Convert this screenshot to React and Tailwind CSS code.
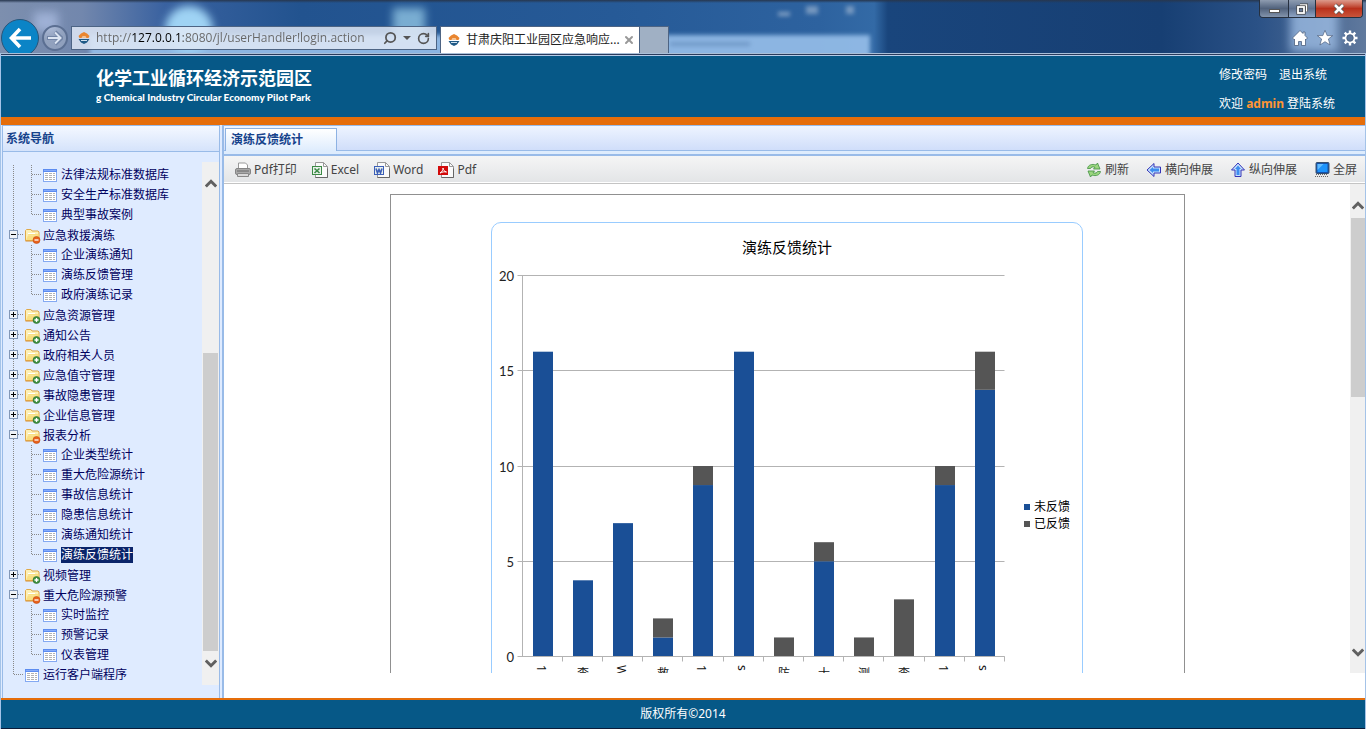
import { useState } from 'react'
import { RotateCw, Search, X } from 'lucide-react'

const tree = [
  {
    label: '法律法规库',
    open: true,
    hidden: true,
    children: ['法律法规标准数据库', '安全生产标准数据库', '典型事故案例'],
  },
  {
    label: '应急救援演练',
    open: true,
    children: ['企业演练通知', '演练反馈管理', '政府演练记录'],
  },
  { label: '应急资源管理' },
  { label: '通知公告' },
  { label: '政府相关人员' },
  { label: '应急值守管理' },
  { label: '事故隐患管理' },
  { label: '企业信息管理' },
  {
    label: '报表分析',
    open: true,
    children: [
      '企业类型统计',
      '重大危险源统计',
      '事故信息统计',
      '隐患信息统计',
      '演练通知统计',
      '演练反馈统计',
    ],
  },
  { label: '视频管理' },
  {
    label: '重大危险源预警',
    open: true,
    children: ['实时监控', '预警记录', '仪表管理'],
  },
]

const chartData = [
  { name: '1', pending: 16, done: 0 },
  { name: '李', pending: 4, done: 0 },
  { name: 'W', pending: 7, done: 0 },
  { name: '救', pending: 1, done: 1 },
  { name: '1', pending: 9, done: 1 },
  { name: 's', pending: 16, done: 0 },
  { name: '防', pending: 0, done: 1 },
  { name: '士', pending: 5, done: 1 },
  { name: '测', pending: 0, done: 1 },
  { name: '李', pending: 0, done: 3 },
  { name: '1', pending: 9, done: 1 },
  { name: 's', pending: 14, done: 2 },
]

/* ---------- Icons ---------- */

function SiteIcon() {
  return (
    <svg className="w-3 h-3 shrink-0" viewBox="0 0 12 12">
      <path d="M6 0 9 1.500 11.500 4 10.500 6H8.500A2.600 2.600 0 0 0 3.500 6H1.500L.5 4 3 1.500Z" fill="#e9852f" />
      <path d="M4 6a2 2 0 0 1 4 0Z" fill="#f4c08d" />
      <path d="M.5 7h11L9 10.500 6 12 3 10.500Z" fill="#1f5a86" />
      <path d="M3 8.500h6" stroke="#cfe0ee" />
    </svg>
  )
}

function HomeIcon() {
  return (
    <svg className="w-4 h-4" viewBox="0 0 16 16">
      <path
        d="M8 .5.500 8 2 9.500l.5-.5v6.500h4v-4h3v4h4V9l.5.5L15.500 8 13 5.500V2h-2v1.500Z"
        fill="#fff"
        stroke="#4b5f7e"
        strokeWidth=".8"
      />
    </svg>
  )
}

function StarIcon() {
  return (
    <svg className="w-4 h-4" viewBox="0 0 16 16">
      <path
        d="m8 .3 2.200 5.300h5.500L11.400 9l1.700 6L8 11.700 2.900 15l1.700-6L.3 5.600h5.500Z"
        fill="#fff"
        stroke="#4b5f7e"
        strokeWidth=".7"
      />
    </svg>
  )
}

function GearIcon() {
  return (
    <svg className="w-4 h-4" viewBox="0 0 16 16" fill="none">
      <path
        d="M8 .5v3M8 12.500v3M.5 8h3M12.500 8h3M2.700 2.700l2 2M11.300 11.300l2 2M2.700 13.300l2-2M11.300 4.700l2-2"
        stroke="#fff"
        strokeWidth="2.400"
      />
      <circle cx="8" cy="8" r="4.400" stroke="#fff" strokeWidth="2" />
      <circle cx="8" cy="8" r="3.200" stroke="#4b5f7e" strokeWidth=".8" />
    </svg>
  )
}

function FolderIcon({ open }) {
  return (
    <svg className="w-4 h-4 shrink-0" viewBox="0 0 16 16">
      <path d="M.5 12.500v-10l1-1h4.500l1 1.500h6l1 1v8.500Z" fill="#fdf0b4" stroke="#e0a94a" />
      <path d="M3 5.500h7M3 7.500h9" stroke="#fff" />
      <path d="M1 12.500 3.500 6H14v6.500Z" fill="#f7d970" opacity=".75" />
      <path d="M.5 13h10" stroke="#d98c2b" />
      <circle cx="11.500" cy="12" r="3.500" fill={open ? '#e8611c' : '#3f9140'} stroke={open ? '#c24a10' : '#2c6b2e'} strokeWidth=".6" />
      <path d={open ? 'M9.500 12h4' : 'M9.500 12h4M11.500 10v4'} stroke="#fff" strokeWidth="1.300" />
    </svg>
  )
}

function SheetIcon() {
  return (
    <svg className="w-[14px] h-[14px] shrink-0" viewBox="0 0 14 14" shapeRendering="crispEdges">
      <path d="M0 0h14v13H0z" fill="#84a9f2" />
      <path d="M0 0h14v3H0z" fill="#5c8cf0" />
      <path d="M1 1h12v1H1z" fill="#86abfa" />
      <path d="M1 3h12v9H1z" fill="#fff" />
      <path d="M2 4.500h3M6 4.500h3M10 4.500h2M2 6.500h3M6 6.500h3M10 6.500h2M2 8.500h3M6 8.500h3M10 8.500h2M2 10.500h3M6 10.500h3M10 10.500h2" stroke="#b3b3b3" />
    </svg>
  )
}

function PrinterIcon() {
  return (
    <svg className="w-4 h-4" viewBox="0 0 16 16">
      <path d="M3.500 7V1h7l2 2v4" fill="#fff" stroke="#999" />
      <rect x=".5" y="6.500" width="15" height="6" rx="1.500" fill="#a9a9a9" stroke="#858585" />
      <path d="M2 9h12" stroke="#6b6b6b" />
      <path d="M2.500 11.500h11v3h-11Z" fill="#d9d9d9" stroke="#888" />
    </svg>
  )
}

function DocIcon({ color, glyph, solid }) {
  return (
    <svg className="w-4 h-4" viewBox="0 0 16 16" fill="none">
      <path d="M3.500.500h8l4 4v11h-12Z" fill="#fafafa" stroke="#999" />
      <path d="M11.500.500v4h4" stroke="#999" />
      <path d="M3.500 15.500h12v-9" stroke="#666" />
      <rect x=".5" y="4.500" width="9" height="8" fill={solid ? color : '#e9f0ea'} stroke={color} />
      <path d={glyph} stroke={solid ? '#fff' : color} strokeWidth={solid ? '1' : '1.600'} />
    </svg>
  )
}

function RefreshIcon() {
  return (
    <svg className="w-4 h-4" viewBox="0 0 16 16" fill="#9bd67f" stroke="#3f9140" strokeWidth=".8" strokeLinejoin="round">
      <path d="M1.500 6.500C2 3 6 1.500 10 3l1.500-2 2.500 6H7.500L9 5.200C6.500 4.500 5 5 4.500 6.500Z" />
      <path d="M14.500 9.500C14 13 10 14.500 6 13l-1.500 2L2 9h6.500L7 10.800c2.500.7 4 .2 4.500-1.300Z" />
    </svg>
  )
}

function ArrowIcon({ up }) {
  return (
    <svg className={up ? 'w-4 h-4 rotate-90' : 'w-4 h-4'} viewBox="0 0 16 16">
      <path d="M1 8 8 1.500V5h6.500v6H8v3.500Z" fill="#c5e2fd" stroke="#3434b8" strokeLinejoin="round" />
      <path d="M3.500 8 7 5v1.500h6v3H7V11Z" fill="#3d8df0" />
    </svg>
  )
}

function ScreenIcon() {
  return (
    <svg className="w-4 h-4" viewBox="0 0 16 16">
      <rect x="2" y=".5" width="13" height="11" rx="1" fill="#1550a8" stroke="#37506e" />
      <rect x="3.500" y="2" width="10" height="8" fill="#1c93fb" />
      <path d="M3.500 2h6l-6 6Z" fill="#62bcff" />
      <path d="M2 12h12l2 3.500H0Z" fill="#e8e8e8" />
      <path d="M1 14.500h14M2 12.500h12" stroke="#666" strokeDasharray="1 1" />
    </svg>
  )
}

/* ---------- Browser window ---------- */

function BrowserBar() {
  const [url, setUrl] = useState(
    'http://127.0.0.1:8080/jl/userHandler!login.action'
  )

  return (
    <div className="relative h-[53px] shrink-0 overflow-hidden pt-[26px] bg-[linear-gradient(90deg,#7d8fae_0%,#7287ad_6%,#3a62a0_12%,#22538f_22%,#265a97_45%,#2d629f_60%,#336aa6_64%,#19457c_65%,#173f73_85%,#2a5186_92%,#60799d_100%)]">
      {/* Blurred desktop behind the glass frame */}
      <div className="absolute inset-x-0 top-0 h-[3px] bg-linear-to-b from-[#27374f] to-transparent" />
      <div className="absolute top-[35px] left-[90px] w-[780px] h-6 bg-[#97bfea] opacity-90 blur-[2px]" />
      <div className="absolute top-[6px] left-[165px] w-12 h-12 rounded-full bg-[#9fd3f4] blur-[4px]" />
      <div className="absolute top-[8px] left-[393px] w-8 h-8 bg-[#8fc3e2] opacity-80 blur-[4px]" />
      <div className="absolute top-[12px] left-[34px] w-6 h-5 bg-[#a9bbe0] opacity-80 blur-[5px]" />
      <div className="absolute top-[12px] left-[778px] w-3 h-1 bg-[#a6bbd5] opacity-70 blur-[2px]" />
      <div className="absolute top-[6px] left-[806px] w-3 h-2 bg-[#a6bbd5] opacity-60 blur-[2px]" />
      <div className="absolute top-[6px] left-[846px] w-2 h-2 bg-[#a6bbd5] opacity-60 blur-[2px]" />
      <div className="absolute top-[42px] left-[670px] w-20 h-1 bg-[#5f86b5] opacity-60 blur-[2px]" />
      <div className="absolute top-[8px] right-[28px] w-12 h-11 bg-[#a9c8ee] opacity-70 blur-[5px]" />

      <div className="absolute top-0 right-[3px] flex h-[18px] rounded-b border border-t-0 border-[#26303f] overflow-hidden">
        <button className="w-7 flex items-end justify-center pb-1 bg-linear-to-b from-[#8e9cb0] via-[#51627c] to-[#8394ac]" aria-label="最小化">
          <span className="w-[11px] h-1 bg-white border border-[#555]" />
        </button>
        <button className="w-7 flex items-center justify-center border-x border-[#26303f] bg-linear-to-b from-[#8e9cb0] via-[#5e7190] to-[#8ea4c4]" aria-label="还原">
          <svg className="w-3 h-3" viewBox="0 0 12 12" fill="none">
            <path d="M4 2h6.500v6.500" stroke="#444" strokeWidth="3" />
            <path d="M4 2h6.500v6.500" stroke="#fff" strokeWidth="1.500" />
            <rect x="2" y="4" width="6" height="6" stroke="#444" strokeWidth="3.200" />
            <rect x="2" y="4" width="6" height="6" stroke="#fff" strokeWidth="1.800" />
          </svg>
        </button>
        <button className="w-[46px] flex items-center justify-center bg-linear-to-b from-[#dc9a8c] via-[#b9301b] to-[#c9543a]" aria-label="关闭">
          <svg className="w-3 h-3" viewBox="0 0 12 12">
            <path d="m2 2 8 8m0-8-8 8" stroke="#555" strokeWidth="4.200" />
            <path d="m2 2 8 8m0-8-8 8" stroke="#fff" strokeWidth="2.600" />
          </svg>
        </button>
      </div>

      <div className="relative flex h-6 items-center pl-px pr-2">
        <button className="w-[38px] h-[38px] shrink-0 rounded-full border border-[#2a5579] bg-[#0b84c6] flex items-center justify-center" aria-label="后退">
          <svg className="w-[22px] h-[22px]" viewBox="0 0 22 22" fill="none" stroke="#fff" strokeWidth="3.600">
            <path d="M2 11h20M11 2 2.500 11l8.500 9" />
          </svg>
        </button>
        <button className="ml-[3px] w-[26px] h-[26px] shrink-0 rounded-full border-2 border-[#5b6f92] bg-white/20 flex items-center justify-center" aria-label="前进">
          <svg className="w-4 h-4" viewBox="0 0 16 16" fill="none">
            <path d="M0 8h14M8 2l6.500 6L8 14" stroke="#7184a6" strokeWidth="4" />
            <path d="M1 8h12M8 2.500 13.500 8 8 13.500" stroke="#dbe4f2" strokeWidth="2" />
          </svg>
        </button>
        <div className="ml-[3px] w-[366px] h-6 flex items-center gap-[6px] px-[6px] border border-[#4d6484] bg-[#dfe8f4]/85">
          <SiteIcon />
          <input
            className="flex-1 min-w-0 h-5 outline-none font-['Open_Sans','Noto_Sans_CJK_SC',sans-serif] text-xs leading-5 text-transparent bg-clip-text bg-[linear-gradient(90deg,#666_35px,#000_35px,#000_87px,#666_87px)]"
            aria-label="地址"
            value={url}
            onChange={(e) => setUrl(e.target.value)}
          />
          <Search className="w-[14px] h-[14px] text-[#555] -scale-x-100" strokeWidth={3} />
          <span className="border-4 border-b-0 border-x-transparent border-t-[#555]" />
          <RotateCw className="w-[13px] h-[13px] text-[#555]" strokeWidth={3} />
        </div>
        <div className="ml-[3px] self-start w-[200px] h-[27px] flex items-center gap-[6px] px-[7px] bg-white border border-b-0 border-[#4d6484] text-[#222]">
          <SiteIcon />
          <span className="whitespace-nowrap">甘肃庆阳工业园区应急响应...</span>
          <button className="-ml-[3px]" aria-label="关闭标签页">
            <X className="w-3 h-3 text-[#999]" strokeWidth={4} />
          </button>
        </div>
        <button className="self-start w-[29px] h-[27px] bg-[#a0b0c4] border border-l-0 border-b-0 border-[#4d6484]" aria-label="新建标签页" />
        <div className="ml-auto flex gap-[9px]">
          <button aria-label="主页"><HomeIcon /></button>
          <button aria-label="收藏"><StarIcon /></button>
          <button aria-label="工具"><GearIcon /></button>
        </div>
      </div>
    </div>
  )
}

/* ---------- Page ---------- */

function Header() {
  return (
    <header className="h-[69px] shrink-0 flex items-start bg-[#065887] border-b-8 border-[#e56d0a] text-white">
      <div className="pl-[95px] pt-[11px]">
        <h1 className="text-lg leading-[22px] font-bold">化学工业循环经济示范园区</h1>
        <p className="text-[10px] leading-4 font-black font-['Lato',sans-serif]">
          g Chemical Industry Circular Economy Pilot Park
        </p>
      </div>
      <div className="ml-auto w-[146px] pt-[9px] leading-5">
        <div className="flex gap-3">
          <a href="#password">修改密码</a>
          <a href="#logout">退出系统</a>
        </div>
        <p className="mt-[9px] whitespace-nowrap">
          欢迎 <b className="text-[#ff9433]">admin</b> 登陆系统
        </p>
      </div>
    </header>
  )
}

// One 18px cell of the tree's dotted guide lines
function Guide({ last, branch, toggle, open }) {
  return (
    <svg className="w-[18px] h-5 shrink-0" viewBox="0 0 18 20" fill="none" shapeRendering="crispEdges">
      <path d={last ? 'M8.500 0v10' : 'M8.500 0v20'} stroke="#888" strokeDasharray="1 1" />
      {branch && <path d="M9 9.500h9" stroke="#888" strokeDasharray="1 1" />}
      {toggle && (
        <>
          <rect x="4.500" y="5.500" width="8" height="8" fill="#eef2f8" stroke="#8398b8" />
          <path d={open ? 'M6 9.500h5' : 'M6 9.500h5M8.500 7v5'} stroke="#000" />
        </>
      )}
    </svg>
  )
}

function Leaf({ label, active, onSelect }) {
  return (
    <a
      href="#leaf"
      className="flex items-center text-[#00005e]"
      onClick={(e) => {
        e.preventDefault()
        onSelect?.(label)
      }}
    >
      <span className="w-5 h-5 flex items-center pl-[2px] pt-[2px]">
        <SheetIcon />
      </span>
      <span className={active ? 'leading-4 bg-[#0a246a] text-white' : 'leading-4'}>{label}</span>
    </a>
  )
}

function ScrollButton({ up, className }) {
  return (
    <button className={`flex shrink-0 items-center justify-center ${className}`} aria-label={up ? '向上滚动' : '向下滚动'}>
      <svg className="w-3 h-[9px]" viewBox="0 0 12 9" fill="none" stroke="#606060" strokeWidth="3">
        <path d={up ? 'M.8 7.500 6 2.300l5.200 5.200' : 'M.8 1.500 6 6.700l5.200-5.200'} />
      </svg>
    </button>
  )
}

function Sidebar() {
  const [selected, setSelected] = useState('演练反馈统计')

  return (
    <aside className="w-[218px] shrink-0 flex flex-col border-x border-t border-[#99bbe8] bg-[#dfebff]">
      <h2 className="h-[26px] shrink-0 px-[3px] leading-[26px] font-bold text-[#15428b] border-b border-[#99bbe8] bg-linear-to-b from-[#f4f8ff] to-[#d5e3fb]">
        系统导航
      </h2>
      <div className="mt-[10px] mb-[13px] flex flex-1 min-h-0">
        <ul className="flex-1 min-w-0 pl-[2px] pt-[3px] overflow-hidden whitespace-nowrap">
          {tree.map((node) => (
            <li key={node.label}>
              {!node.hidden && (
                <div className="flex items-center text-[#00005e]">
                  <Guide branch toggle open={node.open} />
                  <span className="w-5 h-5 flex items-center pl-[2px] pt-[2px]">
                    <FolderIcon open={node.open} />
                  </span>
                  <a href="#folder" className="leading-4 pt-[2px]">{node.label}</a>
                </div>
              )}
              {node.open && (
                <ul>
                  {node.children.map((label, i) => (
                    <li key={label} className="flex">
                      <Guide />
                      <Guide branch last={i === node.children.length - 1} />
                      <Leaf label={label} active={label === selected} onSelect={setSelected} />
                    </li>
                  ))}
                </ul>
              )}
            </li>
          ))}
          <li className="flex">
            <Guide branch last />
            <Leaf label="运行客户端程序" />
          </li>
        </ul>
        <div className="w-[17px] flex flex-col bg-[#f0f0f0] px-px pb-[10px]">
          <ScrollButton up className="h-[42px]" />
          <div className="grow-[149]" />
          <div className="grow-[298] bg-[#cdcdcd]" />
          <ScrollButton className="h-6" />
        </div>
      </div>
    </aside>
  )
}

function ToolButton({ icon, children }) {
  return (
    <button className="flex items-center gap-[3px] text-[#444] whitespace-nowrap">
      {icon}
      {children}
    </button>
  )
}

function Toolbar() {
  return (
    <div className="h-[28px] shrink-0 border-b border-[#c4c4c4]">
      <div className="h-[26px] flex items-center justify-between pt-px pl-[11px] pr-2 bg-linear-to-b from-[#f5f5f5] to-[#e3e5e7]">
        <div className="flex gap-[15px]">
          <ToolButton icon={<PrinterIcon />}>Pdf打印</ToolButton>
          <ToolButton icon={<DocIcon color="#3b8a45" glyph="m2.500 6.500 5 4.500m0-4.500-5 4.500" />}>Excel</ToolButton>
          <ToolButton icon={<DocIcon color="#3c5fb8" glyph="m2 6.500 1.500 4.500L5 7.500 6.500 11 8 6.500" />}>Word</ToolButton>
          <ToolButton icon={<DocIcon color="#d20a0a" solid glyph="M2 11c2-1 3-3 3-5 .5 2 1 3.500 3.500 4-2.500-.5-4 0-6.500 1" />}>Pdf</ToolButton>
        </div>
        <div className="flex gap-[17px]">
          <ToolButton icon={<RefreshIcon />}>刷新</ToolButton>
          <ToolButton icon={<ArrowIcon />}>横向伸展</ToolButton>
          <ToolButton icon={<ArrowIcon up />}>纵向伸展</ToolButton>
          <ToolButton icon={<ScreenIcon />}>全屏</ToolButton>
        </div>
      </div>
    </div>
  )
}

const LEFT = 30.5
const BASE = 385.5
const STEP = 40.2
const UNIT = 19.05

// Labels run downwards: Latin letters lie on their side, Chinese ones stand upright
function AxisLabel({ x, name }) {
  if (/[\x21-\x7e]/.test(name)) {
    return (
      <text transform={`translate(${x + 4} 394) rotate(90)`} fontSize="12" fill="#111">
        {name}
      </text>
    )
  }
  return (
    <text x={x + 10} y="407" textAnchor="middle" fontSize="12" fill="#111">
      {name}
    </text>
  )
}

function Chart() {
  return (
    <svg className="w-[520px] h-[520px] shrink-0 overflow-visible" viewBox="0 0 520 520" role="img" aria-label="演练反馈统计">
      {[0, 5, 10, 15, 20].map((v) => {
        const y = Math.round(BASE - v * UNIT - 0.5) + 0.5
        return (
          <g key={v}>
            <path d={`M${LEFT - 5} ${y}H512.500`} stroke="#b3b3b3" />
            <text x="22" y={y + 5} textAnchor="end" fontSize="13" fill="#222" fontFamily="Lato, sans-serif">
              {v}
            </text>
          </g>
        )
      })}
      <path d={`M${LEFT} 4.500V${BASE}`} stroke="#b3b3b3" />
      {chartData.map((d, i) => {
        const x = Math.round(LEFT + i * STEP + 10)
        const pendingTop = BASE - d.pending * UNIT
        return (
          <g key={i}>
            <path d={`M${Math.round(LEFT + (i + 1) * STEP) - 0.5} ${BASE}v5`} stroke="#b3b3b3" />
            <rect x={x} y={pendingTop} width="20" height={d.pending * UNIT} fill="#1a4f96" />
            <rect x={x} y={pendingTop - d.done * UNIT} width="20" height={d.done * UNIT} fill="#555" />
            <AxisLabel x={x} name={d.name} />
          </g>
        )
      })}
      <path d={`M${LEFT} ${BASE}H512.500`} stroke="#b3b3b3" />
    </svg>
  )
}

function Report() {
  return (
    <div className="flex flex-1 min-h-0 mb-[25px] overflow-hidden">
      <div className="flex-1 min-w-0 overflow-hidden pt-[10px]">
        <div className="mx-auto w-[795px] pt-[27px] border border-[#909090]">
          <div className="mx-auto w-[592px] rounded-[10px] border border-[#99ccff]">
            <h2 className="h-12 leading-[48px] text-center text-[15px] text-black">演练反馈统计</h2>
            <div className="flex items-start">
              <Chart />
              <ul className="ml-3 mt-[227px] leading-[17px] text-black">
                <li className="flex items-center gap-1">
                  <span className="w-[6px] h-[6px] bg-[#1a4f96]" />
                  未反馈
                </li>
                <li className="flex items-center gap-1">
                  <span className="w-[6px] h-[6px] bg-[#555]" />
                  已反馈
                </li>
              </ul>
            </div>
          </div>
        </div>
      </div>
      <div className="w-[15px] shrink-0 flex flex-col bg-[#f0f0f0] pt-2 pl-px">
        <ScrollButton up className="h-[26px]" />
        <div className="grow-[179] bg-[#cdcdcd]" />
        <div className="grow-[234]" />
        <ScrollButton className="h-[42px]" />
      </div>
    </div>
  )
}

function App() {
  return (
    <div className="h-screen flex flex-col overflow-hidden font-['Noto_Sans','Noto_Sans_CJK_SC',sans-serif] text-xs">
      <BrowserBar />
      <div className="flex-1 min-h-0 flex flex-col border-x border-[#a4c3e8] border-t border-t-[#a9bfd8] bg-[#2a3b5c]">
        <div className="h-px shrink-0 bg-[#2a3b5c]" />
        <div className="h-px shrink-0 bg-[#b5cbe8]" />
        <Header />
        <div className="flex flex-1 min-h-0 pl-px bg-[#dfebff]">
          <Sidebar />
          <main className="ml-[2px] flex-1 min-w-0 flex flex-col border-l-2 border-t border-[#99bbe8] bg-white">
            <div className="h-[25px] shrink-0 flex items-end pl-px border-b border-[#99bbe8] bg-linear-to-b from-[#eef4ff] to-[#d0defa]">
              <button className="w-[112px] h-[23px] -mb-px pl-[5px] text-left font-bold text-[#15428b] border border-b-0 border-[#8db2e3] bg-linear-to-b from-white to-[#deecfd]">
                演练反馈统计
              </button>
            </div>
            <div className="h-[5px] shrink-0 bg-[#deecfd] border-b-2 border-[#99bbe8]" />
            <Toolbar />
            <Report />
          </main>
        </div>
        <footer className="h-[30px] shrink-0 border-t-2 border-[#e56d0a] bg-[#065887] text-white text-center leading-[27px]">
          版权所有©2014
        </footer>
        <div className="h-px shrink-0 bg-[#0a1c3a]" />
      </div>
    </div>
  )
}

export default App
